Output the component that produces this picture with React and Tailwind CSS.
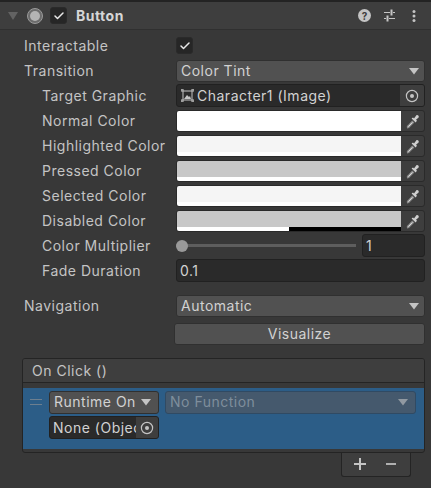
import { Check } from "lucide-react";

const font = { fontFamily: "Inter, sans-serif" };

function Arrow({ className = "" }) {
  return (
    <svg width="10" height="7" viewBox="0 0 10 7" className={className}>
      <path d="M0 0H10L5 6.5Z" fill="#c4c4c4" />
    </svg>
  );
}

function Picker() {
  return (
    <svg width="14" height="14" viewBox="0 0 14 14">
      <circle cx="7" cy="7" r="5.6" fill="none" stroke="#c4c4c4" strokeWidth="1.2" />
      <circle cx="7" cy="7" r="2" fill="#c4c4c4" />
    </svg>
  );
}

function Eyedropper() {
  return (
    <svg width="14" height="15" viewBox="0 0 14 15">
      <path d="M1 14.5L0.8 12.2L6.2 6.4L8.4 8.6L3 14Z" fill="#8c8c8c" />
      <path d="M2.4 12.6L6.4 8.4" stroke="#e2e2e2" strokeWidth="1" />
      <path d="M5.6 4.6L7 3.4L8 4.4L10.4 1.2C11.4 0.2 13.6 2.2 12.6 3.4L10 5.8L11 6.8L9.6 8.4Z" fill="#cfcfcf" />
    </svg>
  );
}

function Label({ children, indent }) {
  return (
    <div className={`w-[176px] shrink-0 ${indent ? "pl-[42px]" : "pl-[24px]"}`}>{children}</div>
  );
}

function Row({ label, indent, children }) {
  return (
    <div className="flex h-[25px] items-center pr-[6px]">
      <Label indent={indent}>{label}</Label>
      <div className="flex-1 min-w-0">{children}</div>
    </div>
  );
}

function Dropdown({ children }) {
  return (
    <div className="mt-[1px] flex h-[22px] items-center justify-between rounded-[3px] border border-[#303030] bg-[#515151] pb-[2px] pl-[4px] pr-[5px] text-[#d2d2d2]">
      <span>{children}</span>
      <Arrow className="mt-[2px]" />
    </div>
  );
}

function ColorField({ color, bar = "white" }) {
  return (
    <div className="mt-[1px] flex h-[22px] overflow-hidden rounded-[3px] border border-[#2a2a2a] bg-[#3e3e3e]">
      <div className="flex w-[224px] flex-col">
        <div className={`flex-1 ${color}`} />
        <div className="flex h-[4px]">
          <div className="flex-1 bg-white" />
          <div className={`flex-1 ${bar === "half" ? "bg-black" : "bg-white"}`} />
        </div>
      </div>
      <div className="flex flex-1 items-center justify-center">
        <Eyedropper />
      </div>
    </div>
  );
}

const colors = [
  ["Normal Color", "bg-white"],
  ["Highlighted Color", "bg-[#f5f5f5]"],
  ["Pressed Color", "bg-[#c8c8c8]"],
  ["Selected Color", "bg-[#f5f5f5]"],
  ["Disabled Color", "bg-[#c8c8c8]", "half"],
];

export default function App() {
  return (
    <div style={font} className="relative h-[488px] w-[431px] overflow-hidden bg-[#383838] text-[14px] tracking-[0.5px] text-[#c4c4c4]">
      {/* HEADER */}
      <div className="flex h-[30px] items-center border-t-2 border-b border-t-[#232323] border-b-[#303030] bg-[#3e3e3e] pl-[8px] pr-[15px]">
        <svg width="10" height="8" viewBox="0 0 10 8" className="mr-[9px]">
          <path d="M0 0H10L5 8Z" fill="#636363" />
        </svg>
        <span className="mr-[7px] flex h-[16px] w-[16px] items-center justify-center rounded-full border border-[#9a9a9a] bg-[#6c6c6c]">
          <span className="h-[10px] w-[10px] rounded-full bg-[#b4b4b4]" />
        </span>
        <span className="mr-[9px] flex h-[17px] w-[17px] items-center justify-center rounded-[3px] border border-[#2a2a2a] bg-[#262626]">
          <Check size={12} strokeWidth={3} color="#e8e8e8" />
        </span>
        <span className="font-bold text-[#d6d6d6]">Button</span>
        <div className="ml-auto flex items-center">
          <span className="mr-[12px] flex h-[13px] w-[13px] items-center justify-center rounded-full bg-[#c4c4c4] text-[10px] font-bold leading-none tracking-normal text-[#3e3e3e]">?</span>
          <svg width="13" height="13" viewBox="0 0 13 13" className="mr-[16px]">
            <path d="M1 3.5H7M10 3.5H12M1 9.5H3M6 9.5H12" stroke="#c4c4c4" fill="none" strokeWidth="1" />
            <path d="M8.5 0.5V6.5M4.5 6.5V12.5" stroke="#c4c4c4" fill="none" strokeWidth="2" />
          </svg>
          <svg width="4" height="12" viewBox="0 0 4 12">
            <circle cx="2" cy="1.5" r="1.5" fill="#c4c4c4" />
            <circle cx="2" cy="6" r="1.5" fill="#c4c4c4" />
            <circle cx="2" cy="10.5" r="1.5" fill="#c4c4c4" />
          </svg>
        </div>
      </div>

      {/* PROPERTIES */}
      <div className="pt-[3px]">
        <Row label="Interactable">
          <span className="flex h-[17px] w-[17px] items-center justify-center rounded-[3px] border border-[#2a2a2a] bg-[#262626]">
            <Check size={12} strokeWidth={3} color="#e8e8e8" />
          </span>
        </Row>
        <Row label="Transition">
          <Dropdown>Color Tint</Dropdown>
        </Row>
        <Row label="Target Graphic" indent>
          <div className="flex h-[23px] items-center overflow-hidden rounded-[3px] border border-[#212121] bg-[#2a2a2a] pl-[4px] text-[#d2d2d2]">
            <svg width="13" height="13" viewBox="0 0 13 13" className="mr-[3px] shrink-0">
              <path d="M2 2H11V11H2Z" fill="none" stroke="#c4c4c4" />
              <path d="M0 1H3M10 1H13M0 12H3M10 12H13M1 0V3M12 0V3M1 10V13M12 10V13" stroke="#c4c4c4" />
              <path d="M3 10L6 6L8 8L9 7L10 10Z" fill="#c4c4c4" />
            </svg>
            <span>Character1 (Image)</span>
            <div className="ml-auto flex h-full w-[24px] items-center justify-center bg-[#3e3e3e]">
              <Picker />
            </div>
          </div>
        </Row>
        {colors.map(([label, color, bar]) => (
          <Row key={label} label={label} indent>
            <ColorField color={color} bar={bar} />
          </Row>
        ))}
        <Row label="Color Multiplier" indent>
          <div className="flex items-center">
            <div className="relative flex h-[12px] w-[180px] items-center">
              <div className="h-[3px] w-full bg-[#5e5e5e]" />
              <div className="absolute left-0 h-[12px] w-[12px] rounded-full bg-[#999999]" />
            </div>
            <div className="ml-[6px] flex h-[23px] flex-1 items-center rounded-[3px] border border-[#212121] bg-[#2a2a2a] pl-[3px] text-[#d2d2d2]">1</div>
          </div>
        </Row>
        <Row label="Fade Duration" indent>
          <div className="flex h-[23px] items-center rounded-[3px] border border-[#212121] bg-[#2a2a2a] pl-[3px] text-[#d2d2d2]">0.1</div>
        </Row>
        <div className="h-[10px]" />
        <Row label="Navigation">
          <Dropdown>Automatic</Dropdown>
        </Row>
        <div className="mt-[5px] ml-[174px] mr-[6px] flex h-[22px] items-center justify-center rounded-[3px] border border-[#303030] bg-[#515151] pb-[2px] text-[#d2d2d2]">
          Visualize
        </div>
      </div>

      {/* ON CLICK */}
      <div className="mt-[13px] ml-[22px] mr-[6px] overflow-hidden rounded-[3px] border border-[#242424]">
        <div className="flex h-[24px] items-center border-b border-[#242424] bg-[#3e3e3e] pl-[9px] text-[#c4c4c4]">On Click ()</div>
        <div className="h-[5px]" />
        <div className="relative h-[61px] bg-[#2c5d87]">
          <div className="flex items-start pt-[3px] pl-[7px] pr-[8px]">
            <div className="mt-[8px] mr-[7px] h-[6px] w-[12px] border-y border-[#6d7f8f]" />
            <div className="w-[110px] shrink-0">
              <div className="flex h-[23px] items-center justify-between rounded-[3px] border border-[#303030] bg-[#515151] pb-[2px] pl-[4px] pr-[7px] text-[#d2d2d2]">
                <span className="whitespace-nowrap">Runtime On</span>
                <Arrow className="mt-[2px] shrink-0" />
              </div>
              <div className="mt-[2px] flex h-[23px] items-center overflow-hidden rounded-[3px] border border-[#212121] bg-[#2a2a2a] pl-[3px] text-[#d2d2d2]">
                <span className="min-w-0 flex-1 overflow-hidden whitespace-nowrap">None (Object)</span>
                <div className="flex h-full w-[22px] shrink-0 items-center justify-center bg-[#3e3e3e]">
                  <Picker />
                </div>
              </div>
            </div>
            <div className="ml-[6px] flex h-[23px] flex-1 items-center justify-between rounded-[3px] border border-[#304a63] bg-[#45596d] pb-[2px] pl-[4px] pr-[7px] text-[#7f8e9c]">
              <span>No Function</span>
              <Arrow className="mt-[2px] opacity-60" />
            </div>
          </div>
        </div>
        <div className="h-[3px]" />
      </div>
      <div className="absolute top-[453px] left-[341px] flex h-[24px] w-[70px] items-center justify-center gap-[20px] rounded-b-[3px] border border-t-0 border-[#242424] bg-[#3e3e3e] pr-[2px] pb-[2px]">
        <svg width="12" height="12" viewBox="0 0 12 12">
          <path d="M0 6H12M6 0V12" stroke="#c4c4c4" strokeWidth="2" />
        </svg>
        <svg width="10" height="12" viewBox="0 0 10 12">
          <path d="M0 6H10" stroke="#b0b0b0" strokeWidth="2" />
        </svg>
      </div>
    </div>
  );
}
